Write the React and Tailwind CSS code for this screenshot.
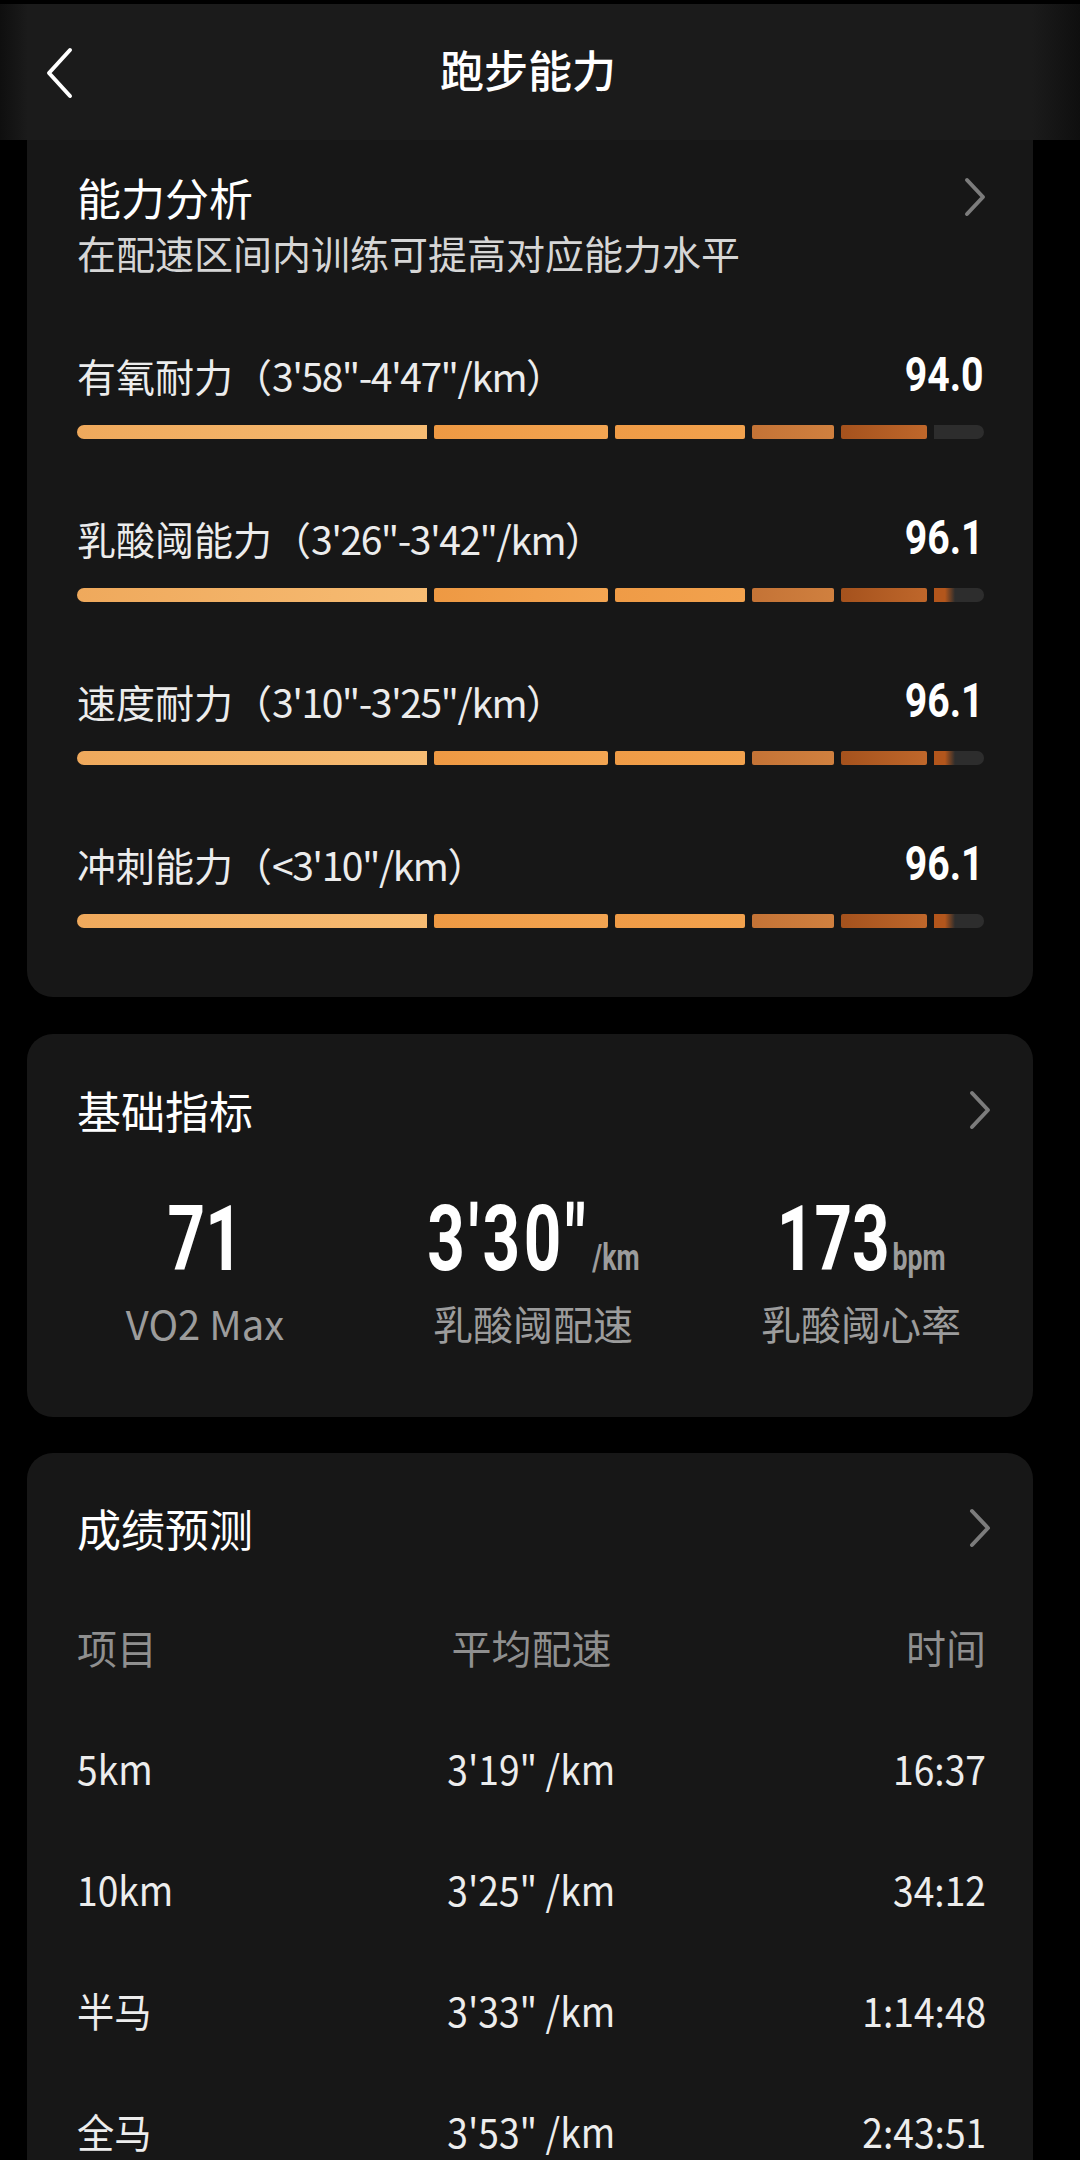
import React from "react";

const segs = [
  { w: "w-[350px]", cls: "rounded-l-full rounded-r-[2px] bg-gradient-to-r from-[#efa95c] to-[#f7bc73]" },
  { w: "w-[174px]", cls: "rounded-[2px] bg-gradient-to-r from-[#ee9943] to-[#f3a552]" },
  { w: "w-[130px]", cls: "rounded-[2px] bg-gradient-to-r from-[#ef9b46] to-[#f2a24e]" },
  { w: "w-[82px]", cls: "rounded-[2px] bg-gradient-to-r from-[#c47336] to-[#d0803f]" },
  { w: "w-[86px]", cls: "rounded-[2px] bg-gradient-to-r from-[#a5521d] to-[#bf672b]" },
];

function Chevron() {
  return (
    <svg width="22" height="40" viewBox="0 0 22 40" className="shrink-0">
      <polyline points="3,3 19,20 3,37" fill="none" stroke="#7c7c7c" strokeWidth="4" strokeLinecap="round" strokeLinejoin="round" />
    </svg>
  );
}

function Bar({ partial }) {
  return (
    <div className="flex h-[14px] gap-[7px]">
      {segs.map((s, i) => (
        <div key={i} className={`${s.w} h-full ${s.cls}`} />
      ))}
      {partial ? (
        <div className="flex-1 h-full rounded-l-[2px] rounded-r-full bg-[linear-gradient(to_right,#b3561c_0px,#b3561c_11px,#2d2d2d_21px)]" />
      ) : (
        <div className="flex-1 h-full rounded-l-[2px] rounded-r-full bg-[#2d2d2d]" />
      )}
    </div>
  );
}

function AbilityRow({ label, range, value, partial }) {
  return (
    <div className="mt-[75px]">
      <div className="flex h-[48px] items-center justify-between">
        <span className="text-[39px] leading-[48px] text-[#ececec]">
          {label}（<span className="tracking-[-1.5px]">{range}</span>）
        </span>
        <span className="inline-block origin-right scale-x-[0.8] font-['Roboto',sans-serif] text-[49px] font-bold leading-[48px] text-white">
          {value}
        </span>
      </div>
      <div className="mt-[26px]">
        <Bar partial={partial} />
      </div>
    </div>
  );
}

function Metric({ value, suffix, label, wide }) {
  return (
    <div className="flex flex-col items-center">
      <div className="flex h-[91px] origin-center scale-x-[0.72] items-baseline justify-center font-['Roboto',sans-serif] font-bold leading-[91px]">
        <span className={`text-[91px] text-white ${wide ? "tracking-[5px]" : ""}`}>{value}</span>
        {suffix ? <span className="ml-[4px] text-[37px] text-[#9c9c9c]">{suffix}</span> : null}
      </div>
      <div className="mt-[14px] text-[40px] leading-[48px] text-[#9c9c9c]">{label}</div>
    </div>
  );
}

function TableRow({ a, b, c, head }) {
  const color = head ? "text-[#8f8f8f]" : "text-[#ededed]";
  const sx = head ? "" : "scale-x-[0.93]";
  return (
    <div className={`mt-[73px] grid h-[48px] grid-cols-3 items-center text-[40px] leading-[48px] ${color}`}>
      <span className="text-left">
        <span className={`inline-block origin-left ${sx}`}>{a}</span>
      </span>
      <span className="text-center">
        <span className={`inline-block origin-center ${sx}`}>{b}</span>
      </span>
      <span className="text-right">
        <span className={`inline-block origin-right ${sx}`}>{c}</span>
      </span>
    </div>
  );
}

export default function App() {
  return (
    <div className="h-[2160px] w-[1080px] overflow-hidden bg-black font-['Noto_Sans_CJK_SC','Noto_Sans',sans-serif]">
      {/* header */}
      <div className="relative flex h-[140px] items-center justify-center border-t-[4px] border-black bg-[linear-gradient(to_right,#0f0f0f_0px,#1b1b1b_28px,#1b1b1b_1032px,#0f0f0f_1080px)]">
        <svg width="30" height="52" viewBox="0 0 30 52" className="absolute left-[44px] top-[43px]">
          <polyline points="26,3 5,26 26,49" fill="none" stroke="#ffffff" strokeWidth="4" strokeLinecap="round" strokeLinejoin="round" />
        </svg>
        <span className="mr-[24px] mt-[-6px] text-[44px] font-medium leading-[52px] text-white">跑步能力</span>
      </div>

      <div className="pl-[27px] pr-[47px]">
        {/* card 1 */}
        <div className="rounded-b-[26px] bg-[#171717] pb-[69px] pl-[50px] pr-[49px] pt-[31px]">
          <div className="flex h-[52px] items-center justify-between">
            <span className="text-[44px] leading-[52px] text-white">能力分析</span>
            <span className="mr-[-2px]"><Chevron /></span>
          </div>
          <div className="mt-[5px] text-[39px] leading-[48px] text-[#d6d6d6]">在配速区间内训练可提高对应能力水平</div>

          <AbilityRow label="有氧耐力" range={'3\'58"-4\'47"/km'} value="94.0" />
          <AbilityRow label="乳酸阈能力" range={'3\'26"-3\'42"/km'} value="96.1" partial />
          <AbilityRow label="速度耐力" range={'3\'10"-3\'25"/km'} value="96.1" partial />
          <AbilityRow label="冲刺能力" range={'<3\'10"/km'} value="96.1" partial />
        </div>

        {/* card 2 */}
        <div className="mt-[37px] rounded-[26px] bg-[#171717] pb-[70px] pt-[50px]">
          <div className="flex h-[52px] items-center justify-between pl-[50px] pr-[42px]">
            <span className="text-[44px] leading-[52px] text-white">基础指标</span>
            <Chevron />
          </div>
          <div className="mt-[58px] grid grid-cols-3 pl-[14px] pr-[8px]">
            <Metric value="71" label="VO2 Max" />
            <Metric value={'3\'30"'} suffix="/km" label="乳酸阈配速" wide />
            <Metric value="173" suffix="bpm" label="乳酸阈心率" />
          </div>
        </div>

        {/* card 3 */}
        <div className="mt-[36px] rounded-[26px] bg-[#171717] pb-[80px] pl-[50px] pr-[47px] pt-[49px]">
          <div className="flex h-[52px] items-center justify-between">
            <span className="text-[44px] leading-[52px] text-white">成绩预测</span>
            <span className="mr-[-5px]"><Chevron /></span>
          </div>
          <div className="mt-[-4px]">
            <TableRow head a="项目" b="平均配速" c="时间" />
            <TableRow a="5km" b={'3\'19" /km'} c="16:37" />
            <TableRow a="10km" b={'3\'25" /km'} c="34:12" />
            <TableRow a="半马" b={'3\'33" /km'} c="1:14:48" />
            <TableRow a="全马" b={'3\'53" /km'} c="2:43:51" />
          </div>
        </div>
      </div>
    </div>
  );
}
